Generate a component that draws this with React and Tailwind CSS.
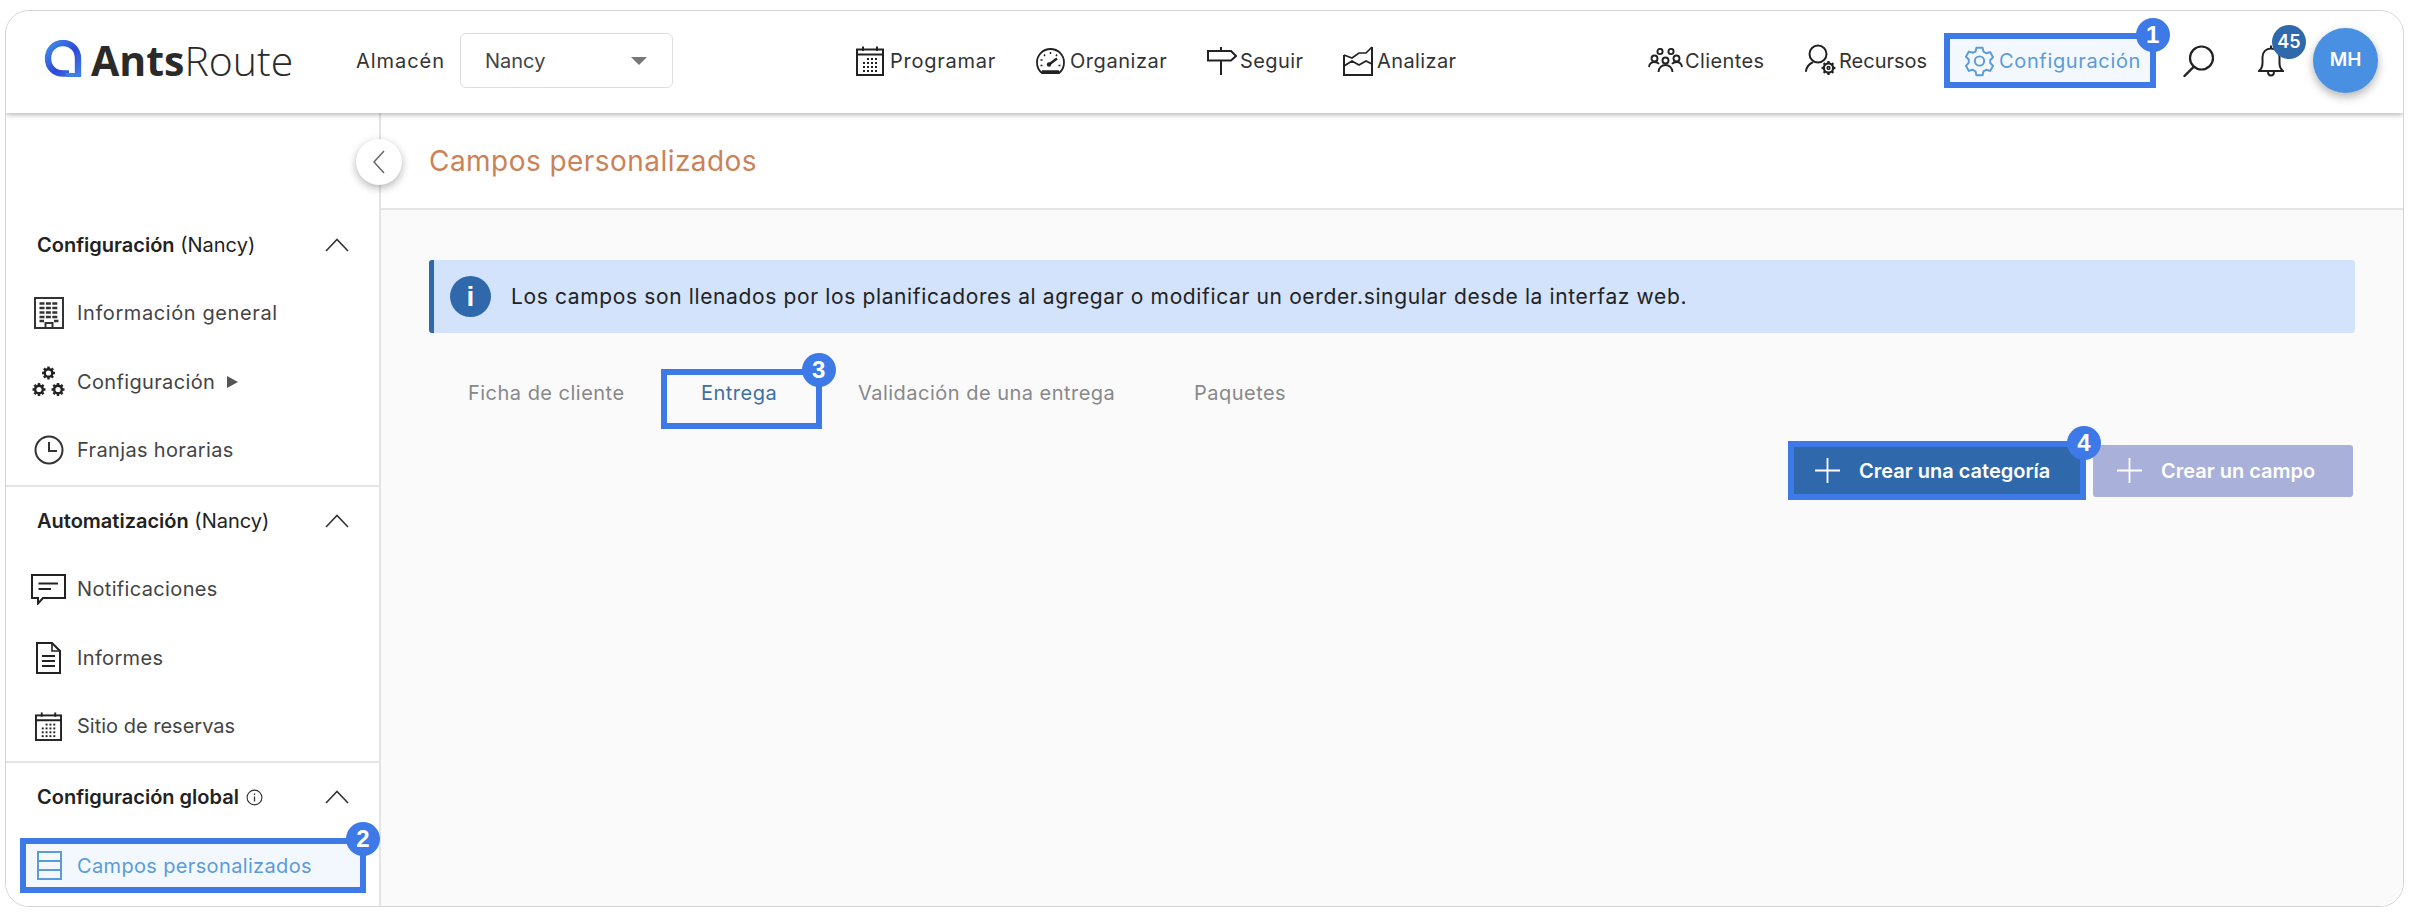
import { useId } from "react";

// ---- icons, drawn to follow the reference ----
function LogoMark() {
  const id = useId();
  return (
    <svg width="40" height="39" viewBox="0 0 40 39" fill="none" className="mb-[3px] shrink-0">
      <defs>
        <linearGradient id={id} x1="0" y1="0" x2="1" y2="1">
          <stop offset="0" stopColor="#3f8fe8" />
          <stop offset="0.55" stopColor="#2f48d8" />
          <stop offset="1" stopColor="#3f7fe0" />
        </linearGradient>
      </defs>
      <path d="M35 36V18.5C35 9.5 28.5 3 20 3S5 9.5 5 18.5 11.5 33.5 20 33.5H26" stroke={`url(#${id})`} strokeWidth="6.4" strokeLinejoin="round" />
      <path d="M22 33H38V37H24Z" fill="#3f7fe0" />
    </svg>
  );
}

function CalendarIcon({ w = 28, h = 30 }) {
  return (
    <svg width={w} height={h} viewBox="0 0 28 30" fill="none" stroke="#222" strokeWidth="2">
      <rect x="1" y="3.5" width="26" height="25.5" />
      <path d="M1 8.5H27M7 0.5V5M21 0.5V5" />
      <g fill="#222" stroke="none">
        {[8, 12, 16, 20].map((x) =>
          [13, 17, 21, 25].map((y) =>
            (x === 8 && y === 13) ? null : <rect key={x + "-" + y} x={x - 1} y={y - 1} width="2" height="2" />
          )
        )}
      </g>
    </svg>
  );
}

function GaugeIcon() {
  return (
    <svg width="29" height="26" viewBox="0 0 29 26" fill="none" stroke="#222" strokeWidth="1.8">
      <path d="M6 25C2.8 22.6 1 19 1 14.5 1 7 7 1 14.5 1S28 7 28 14.5C28 19 26.2 22.6 23 25Z" />
      <path d="M6 23.5H23" strokeWidth="2.6" />
      <path d="M13 16.5L21 10.5" strokeWidth="2.4" />
      <circle cx="13" cy="16.5" r="2.2" fill="#222" stroke="none" />
      <path d="M14.5 4V6M8 6.5L9 8M21 6.5L20 8M4.5 12H6.5M4.5 17.5H6.5M22.5 17.5H24.5" strokeWidth="1.4" />
    </svg>
  );
}

function SignIcon() {
  return (
    <svg width="30" height="28" viewBox="0 0 30 28" fill="none" stroke="#222" strokeWidth="2">
      <path d="M1 4H24L29 9 24 13.5H1Z" />
      <path d="M14 0V4M14 13.5V28" />
    </svg>
  );
}

function ChartIcon() {
  return (
    <svg width="30" height="30" viewBox="0 0 30 30" fill="none" stroke="#222" strokeWidth="2">
      <path d="M1 9V29H29V1" />
      <path d="M1 9L9 12 16 7 23 7 29 1" strokeWidth="1.6" />
      <path d="M1 20L9 15 16 19 23 15 29 18" strokeWidth="1.8" />
    </svg>
  );
}

function PeopleIcon() {
  return (
    <svg width="35" height="25" viewBox="0 0 35 25" fill="none" stroke="#222" strokeWidth="1.9">
      <circle cx="12" cy="3.5" r="2.6" />
      <circle cx="23" cy="3.5" r="2.6" />
      <circle cx="6.5" cy="10.5" r="3" />
      <circle cx="17.5" cy="12.5" r="3" />
      <circle cx="28.5" cy="10.5" r="3" />
      <path d="M1 19C1.5 15.5 3.5 14 6.5 14 8.5 14 10 14.6 11 16M34 19C33.5 15.5 31.5 14 28.5 14 26.5 14 25 14.6 24 16M10.5 24C11 19.5 14 17 17.5 17S24 19.5 24.5 24" />
    </svg>
  );
}

function SmallGear({ x, y, r, color = "#222", sw = 2, dot = true, out = 1.5 }) {
  const teeth = [0, 45, 90, 135, 180, 225, 270, 315];
  return (
    <g stroke={color} fill="none">
      <circle cx={x} cy={y} r={r} strokeWidth={sw} />
      {dot && <circle cx={x} cy={y} r={r * 0.3} strokeWidth={sw * 0.7} />}
      {teeth.map((a) => (
        <line
          key={a}
          x1={x + Math.cos((a * Math.PI) / 180) * r}
          y1={y + Math.sin((a * Math.PI) / 180) * r}
          x2={x + Math.cos((a * Math.PI) / 180) * r * out}
          y2={y + Math.sin((a * Math.PI) / 180) * r * out}
          strokeWidth={sw * 1.05}
        />
      ))}
    </g>
  );
}

function ResourceIcon() {
  return (
    <svg width="33" height="33" viewBox="0 0 33 33" fill="none">
      <circle cx="13" cy="10" r="8.5" stroke="#222" strokeWidth="2" />
      <path d="M1 27C1.8 22.8 4 20 7.5 18.5" stroke="#222" strokeWidth="2" strokeLinecap="round" />
      <SmallGear x={23.5} y={24} r={4.6} sw={2.2} />
    </svg>
  );
}

function GearIcon() {
  return (
    <svg width="31" height="32" viewBox="0 0 24 24" fill="none" stroke="#5b9bd8" strokeWidth="1.5" strokeLinejoin="round">
      <path d="M9.6 1.8h4.8l.7 3 2.1 1.2 3-.9 2.3 4-2.2 2.1v2.4l2.2 2.1-2.3 4-3-.9-2.1 1.2-.7 3H9.6l-.7-3-2.1-1.2-3 .9-2.3-4L3.7 13.2v-2.4L1.5 8.7l2.3-4 3 .9L8.9 4.8z" />
      <circle cx="12" cy="12" r="3.6" />
    </svg>
  );
}

function SearchIcon() {
  return (
    <svg width="32" height="32" viewBox="0 0 32 32" fill="none" stroke="#222" strokeWidth="2.2">
      <circle cx="18.5" cy="13" r="11.5" />
      <path d="M10.5 22L1.5 31" strokeLinecap="round" strokeWidth="2.4" />
    </svg>
  );
}

function BellIcon() {
  return (
    <svg width="26" height="32" viewBox="0 0 26 32" fill="none" stroke="#222" strokeWidth="2">
      <path d="M1 26C3.5 24 4.5 21.5 4.5 18V12C4.5 7 8 3.5 13 3.5S21.5 7 21.5 12V18C21.5 21.5 22.5 24 25 26Z" />
      <path d="M13 0.5V3.5" />
      <path d="M10 26.5C10 29 11 30.5 13 30.5S16 29 16 26.5" />
    </svg>
  );
}

function Chevron() {
  return (
    <svg width="24" height="14" viewBox="0 0 24 14" fill="none" stroke="#333" strokeWidth="1.6">
      <path d="M1 13L12 1.5 23 13" />
    </svg>
  );
}

function BuildingIcon() {
  return (
    <svg width="30" height="32" viewBox="0 0 30 32" fill="none" stroke="#333" strokeWidth="2">
      <path d="M1 1H29V31H1Z" />
      <path d="M11.5 31V26H18.5V31" />
      <path d="M5.5 6.5H24.5M5.5 11H24.5M5.5 15.5H24.5M5.5 20H24.5M5.5 24H10M20 24H24.5" strokeWidth="2.6" strokeDasharray="5 1.4" />
    </svg>
  );
}

function GearsIcon() {
  return (
    <svg width="33" height="31" viewBox="0 0 33 31" fill="none">
      <SmallGear x={16.5} y={7} r={3.8} sw={2.4} dot={false} out={1.7} />
      <SmallGear x={7} y={23.5} r={3.8} sw={2.4} dot={false} out={1.7} />
      <SmallGear x={26} y={23.5} r={3.8} sw={2.4} dot={false} out={1.7} />
    </svg>
  );
}

function ClockIcon() {
  return (
    <svg width="30" height="30" viewBox="0 0 30 30" fill="none" stroke="#333" strokeWidth="2">
      <circle cx="15" cy="15" r="13.5" />
      <path d="M15 7V16H23" />
    </svg>
  );
}

function CommentIcon() {
  return (
    <svg width="35" height="31" viewBox="0 0 35 31" fill="none" stroke="#222" strokeWidth="2">
      <path d="M1 1H34V24H12L7 29.5V24H1Z" />
      <path d="M7.5 9.5H27M7.5 15H20" strokeWidth="2.2" />
    </svg>
  );
}

function DocIcon() {
  return (
    <svg width="25" height="32" viewBox="0 0 25 32" fill="none" stroke="#222" strokeWidth="2">
      <path d="M1 1H16L24 9V31H1Z" />
      <path d="M16 1V9H24" strokeWidth="1.6" />
      <path d="M6 14H19M6 19H19M6 24H19" strokeWidth="1.8" />
    </svg>
  );
}

function TableIcon() {
  return (
    <svg width="25" height="29" viewBox="0 0 25 29" fill="none" stroke="#5b9bd8" strokeWidth="2">
      <rect x="1" y="1" width="23" height="27" />
      <path d="M1 10H24M1 19H24" />
    </svg>
  );
}

function InfoSmall() {
  return (
    <svg width="17" height="17" viewBox="0 0 17 17" fill="none" stroke="#333" strokeWidth="1.1">
      <circle cx="8.5" cy="8.5" r="7.4" />
      <path d="M8.5 7.5V12.5M8.5 4.5V6" strokeWidth="1.3" />
    </svg>
  );
}

function Plus() {
  return (
    <svg width="25" height="25" viewBox="0 0 25 25" stroke="#fff" strokeWidth="1.8" className="shrink-0">
      <path d="M12.5 0V25M0 12.5H25" />
    </svg>
  );
}

// numbered marker lying over the highlighted element
function Marker({ n, className }) {
  return (
    <span className={`absolute z-20 flex h-[34px] w-[34px] items-center justify-center rounded-full bg-[#3d7ae8] font-['Liberation_Sans',sans-serif] text-[24px] font-bold text-white ${className}`}>
      {n}
    </span>
  );
}

function NavItem({ icon, label, className, labelClass = "tracking-[0.4px]" }) {
  return (
    <div className={`flex items-center text-[20px] text-[#333] ${className}`}>
      {icon}
      <span className={labelClass}>{label}</span>
    </div>
  );
}

function SideRow({ icon, label, extra, labelClass = "tracking-[0.35px]" }) {
  return (
    <div className="flex h-[68.6px] items-center">
      <div className="flex w-[71px] shrink-0 items-center justify-center pl-[25px] pr-[11px]">{icon}</div>
      <span className={`text-[20px] text-[#444] ${labelClass}`}>{label}</span>
      {extra}
    </div>
  );
}

function SideHeader({ children }) {
  return (
    <div className="flex h-[44px] items-center justify-between pl-[31px] pr-[30px] text-[20px] text-[#222]">
      <div className="flex items-center">{children}</div>
      <Chevron />
    </div>
  );
}

export default function App() {
  return (
    <div className="h-[919px] w-[2410px] overflow-hidden bg-white pl-[5px] pt-[10px] font-['Inter',sans-serif]">
      <div className="relative flex h-[897px] w-[2399px] flex-col overflow-hidden rounded-[24px] border border-[#d4d4d4] bg-white">
        {/* Top bar */}
        <header className="relative z-10 flex h-[102px] shrink-0 items-center bg-white pb-[3px] shadow-[0_2px_5px_rgba(0,0,0,0.28)]">
          <div className="ml-[37px] flex w-[245px] items-center">
            <LogoMark />
            <span className="ml-[8px] font-['Open_Sans',sans-serif] text-[41px] leading-none text-[#2a2a2a]">
              <span className="font-bold">Ants</span>
              <span className="font-light">Route</span>
            </span>
          </div>
          <span className="ml-[68px] w-[104px] text-[20px] tracking-[0.95px] text-[#333]">Almacén</span>
          <div className="flex h-[55px] w-[213px] items-center justify-between rounded-[6px] border border-[#ddd] pl-[24px] pr-[25px] text-[20px] text-[#444]">
            <span>Nancy</span>
            <span className="h-0 w-0 border-x-[8px] border-t-[8px] border-x-transparent border-t-[#777]" />
          </div>

          <NavItem className="ml-[183px] w-[180px] gap-[6px]" labelClass="tracking-[0.75px]" icon={<CalendarIcon />} label="Programar" />
          <NavItem className="w-[171px] gap-[5px]" labelClass="tracking-[0.55px]" icon={<GaugeIcon />} label="Organizar" />
          <NavItem className="w-[136px] gap-[3px]" icon={<SignIcon />} label="Seguir" />
          <NavItem className="w-[305px] gap-[4px]" icon={<ChartIcon />} label="Analizar" />
          <NavItem className="w-[157px] gap-[2px]" icon={<PeopleIcon />} label="Clientes" />
          <NavItem className="w-[139px] gap-[1px]" labelClass="tracking-normal" icon={<ResourceIcon />} label="Recursos" />

          <div className="relative flex h-[55px] w-[212px] items-center gap-[4px] border-[6px] border-[#3d7ae8] bg-[#f2f8fe] pl-[14px] text-[20px] tracking-[0.65px] text-[#5b9bd8]">
            <GearIcon />
            <span>Configuración</span>
            <Marker n="1" className="right-[-20px] top-[-21px]" />
          </div>

          <div className="ml-[27px] w-[75px]">
            <SearchIcon />
          </div>
          <div className="relative w-[55px]">
            <BellIcon />
            <span className="absolute left-[14px] top-[-20px] flex h-[34px] w-[34px] items-center justify-center rounded-full bg-[#2f68ab] text-[18px] font-semibold text-white">
              45
            </span>
          </div>
          <div className="flex h-[65px] w-[65px] items-center justify-center rounded-full bg-[#4a90e2] text-[19px] font-semibold text-white shadow-[0_4px_10px_rgba(0,0,0,0.3)]">
            MH
          </div>
        </header>

        <div className="flex min-h-0 flex-1">
          {/* Sidebar */}
          <aside className="w-[375px] shrink-0 border-r-2 border-[#e4e4e4] bg-white">
            <section className="h-[374px] border-b-2 border-[#e4e4e4] pt-[110px]">
              <SideHeader>
                <b className="font-semibold">Configuración</b>&nbsp;(Nancy)
              </SideHeader>
              <div className="mt-[12px]">
                <SideRow icon={<BuildingIcon />} label="Información general" labelClass="tracking-[0.6px]" />
                <SideRow
                  icon={<GearsIcon />}
                  label="Configuración"
                  extra={<span className="ml-[12px] h-0 w-0 border-y-[6px] border-l-[11px] border-y-transparent border-l-[#555]" />}
                />
                <SideRow icon={<ClockIcon />} label="Franjas horarias" />
              </div>
            </section>
            <section className="h-[276px] border-b-2 border-[#e4e4e4] pt-[12px]">
              <SideHeader>
                <b className="font-semibold">Automatización</b>&nbsp;(Nancy)
              </SideHeader>
              <div className="mt-[12px]">
                <SideRow icon={<CommentIcon />} label="Notificaciones" />
                <SideRow icon={<DocIcon />} label="Informes" />
                <SideRow icon={<CalendarIcon w={27} h={29} />} label="Sitio de reservas" labelClass="tracking-normal" />
              </div>
            </section>
            <section className="pt-[12px]">
              <SideHeader>
                <b className="font-semibold">Configuración global</b>
                <span className="ml-[7px] flex">
                  <InfoSmall />
                </span>
              </SideHeader>
              <div className="relative ml-[14px] mt-[19px] flex h-[55px] w-[346px] items-center border-[6px] border-[#3d7ae8] bg-[#f2f8fe] pl-[11px]">
                <TableIcon />
                <span className="ml-[15px] text-[20px] tracking-[0.35px] text-[#5b9bd8]">Campos personalizados</span>
                <Marker n="2" className="right-[-20px] top-[-22px]" />
              </div>
            </section>
          </aside>

          {/* Content */}
          <main className="relative flex min-w-0 flex-1 flex-col bg-[#fafafa]">
            <div className="absolute left-[-25px] top-[26px] z-20 flex h-[46px] w-[46px] items-center justify-center rounded-full bg-white shadow-[0_3px_8px_rgba(0,0,0,0.3)]">
              <svg width="12" height="24" viewBox="0 0 12 24" fill="none" stroke="#666" strokeWidth="1.5">
                <path d="M11 1L1 12 11 23" />
              </svg>
            </div>
            <div className="flex h-[97px] shrink-0 items-center border-b-2 border-[#e4e4e4] bg-white pl-[48px] text-[28px] tracking-[0.45px] text-[#cb8257]">
              Campos personalizados
            </div>

            <div className="ml-[48px] mt-[50px] flex h-[73px] w-[1926px] items-center rounded-[3px] border-l-[5px] border-[#2f68ab] bg-[#d2e3fb] pl-[16px]">
              <span className="flex h-[41px] w-[41px] items-center justify-center rounded-full bg-[#2f68ab] font-['Liberation_Sans',sans-serif] text-[28px] font-bold text-white">
                i
              </span>
              <span className="ml-[20px] text-[21px] tracking-[0.63px] text-[#222]">
                Los campos son llenados por los planificadores al agregar o modificar un oerder.singular desde la interfaz web.
              </span>
            </div>

            <div className="ml-[87px] mt-[36px] flex h-[60px] items-start text-[20px] tracking-[0.48px] text-[#888]">
              <span className="w-[193px] leading-[48px]">Ficha de cliente</span>
              <div className="relative h-[60px] w-[161px] border-[6px] border-[#3d7ae8] pl-[34px] leading-[36px] text-[#3d6ea5]">
                Entrega
                <Marker n="3" className="right-[-20px] top-[-22px]" />
              </div>
              <span className="ml-[36px] w-[336px] leading-[48px]">Validación de una entrega</span>
              <span className="leading-[48px]">Paquetes</span>
            </div>

            <div className="mt-[12px] flex items-center justify-end gap-[7px] pr-[50px] text-[20px] font-semibold text-white">
              <div className="relative flex h-[59px] w-[298px] items-center border-[6px] border-[#3d7ae8] bg-[#2f68ab] pl-[21px]">
                <Plus />
                <span className="ml-[19px]">Crear una categoría</span>
                <Marker n="4" className="right-[-21px] top-[-21px]" />
              </div>
              <div className="flex h-[52px] w-[260px] items-center rounded-[3px] bg-[#a9b0d9] pl-[24px]">
                <Plus />
                <span className="ml-[19px]">Crear un campo</span>
              </div>
            </div>
          </main>
        </div>
      </div>
    </div>
  );
}
